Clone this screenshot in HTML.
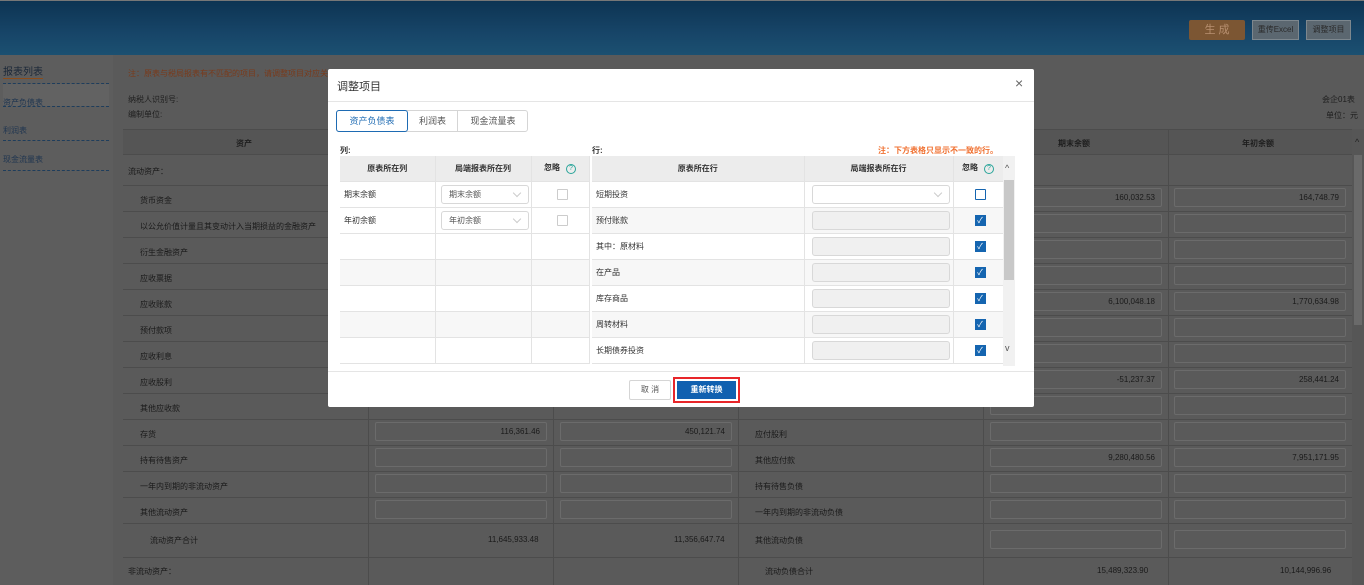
<!DOCTYPE html>
<html style="background:#5a5a5a"><head><meta charset="utf-8"><style>
*{box-sizing:border-box;margin:0;padding:0}
html,body{background:#5a5a5a}
body{width:1364px;height:585px;overflow:hidden;position:relative;font-family:"Liberation Sans","Noto Sans CJK SC",sans-serif;font-size:8px;color:#1e1e1e}
.a{position:absolute}
.bg{left:0;top:0;width:1364px;height:585px;background:#5a5a5a}
.hdr{left:0;top:0;width:1364px;height:55px;background:linear-gradient(180deg,#0d3453 0%,#174568 60%,#1b5071 100%);border-top:1px solid #777}
.side{left:0;top:55px;width:113px;height:530px;background:#5d5d5d}
.sl{left:3px;width:106px;border-bottom:1px dashed #1e3d5c}
.inp{position:absolute;height:19px;border:1px solid #6b6b6b;border-radius:2px;text-align:right;padding-right:6px;line-height:17px;font-size:8px;color:#1a1a1a}
.lbl{position:absolute;font-size:8px;color:#1a1a1a}
.m{left:328px;top:69px;width:706px;height:338px;background:#fff;border-radius:2px}
.mt td,.mt th{border-right:1px solid #e3e3e3;border-bottom:1px solid #e3e3e3;height:26px;font-size:8px;color:#333;text-align:left;padding-left:4px;font-weight:normal}
.mt th{background:#ececec;font-weight:bold;text-align:center;height:25px;padding:0}
.mt{border-collapse:collapse;position:absolute;table-layout:fixed}
.sel{width:88px;height:19px;border:1px solid #d8d8d8;border-radius:3px;margin:0 auto;font-size:8px;color:#555;line-height:17px;padding-left:7px;position:relative}
.sel:after{content:"";position:absolute;right:8px;top:4px;width:5px;height:5px;border-right:1px solid #ccc;border-bottom:1px solid #ccc;transform:rotate(45deg)}
.dis{width:138px;height:19px;border:1px solid #d8d8d8;border-radius:3px;background:#f0f0f0;margin:0 auto}
.cb{width:11px;height:11px;border:1px solid #ccc;border-radius:1px;margin:0 auto}
.ck{width:11px;height:11px;background:#1565b0;margin:0 auto;color:#fff;font-size:8px;line-height:11px;text-align:center}
.q{display:inline-block;width:10px;height:10px;border:1px solid #2aa59a;border-radius:50%;color:#2aa59a;font-size:7px;line-height:8px;text-align:center;margin-left:6px;font-weight:normal}
.g{color:#aaa}
</style></head><body>
<div class="a bg"></div>
<div class="a hdr"></div>
<div class="a" style="left:1189px;top:20px;width:56px;height:20px;background:#7c5633;color:#b89070;font-size:11px;text-align:center;line-height:20px;border-radius:2px">生 成</div>
<div class="a" style="left:1252px;top:20px;width:47px;height:20px;background:#5b6770;border:1px solid #7d878e;color:#2a2a2a;font-size:8px;text-align:center;line-height:18px">重传Excel</div>
<div class="a" style="left:1306px;top:20px;width:45px;height:20px;background:#5b6770;border:1px solid #7d878e;color:#2a2a2a;font-size:8px;text-align:center;line-height:18px">调整项目</div>

<div class="a side"></div>
<div class="a" style="left:3px;top:63px;font-size:10px;color:#1c2838;border-bottom:1px solid #8a4d1c">报表列表</div>
<div class="a sl" style="top:83px"></div>
<div class="a" style="left:3px;top:84px;width:106px;height:22px;background:#626262"></div>
<div class="a" style="left:3px;top:97px;color:#1f3550">资产负债表</div>
<div class="a sl" style="top:106px"></div>
<div class="a" style="left:3px;top:125px;color:#1f3550">利润表</div>
<div class="a sl" style="top:140px"></div>
<div class="a" style="left:3px;top:154px;color:#1f3550">现金流量表</div>
<div class="a sl" style="top:170px"></div>

<div class="a" style="left:128px;top:68px;color:#7a3a1a">注：原表与税局报表有不匹配的项目，请调整项目对应关系</div>
<div class="a" style="left:128px;top:94px;color:#1e1e1e">纳税人识别号:</div>
<div class="a" style="left:128px;top:109px;color:#1e1e1e">编制单位:</div>
<div class="a" style="left:1322px;top:94px">会企01表</div>
<div class="a" style="left:1326px;top:110px">单位：元</div>

<div class="a" style="left:123px;top:129px;width:1229px;height:26px;background:#555;border-top:1px solid #4c4c4c;border-bottom:1px solid #4c4c4c"></div>
<div class="a" style="left:236px;top:138px;font-weight:bold">资产</div>
<div class="a" style="left:1058px;top:138px;font-weight:bold">期末余额</div>
<div class="a" style="left:1242px;top:138px;font-weight:bold">年初余额</div>
<div class="a" style="left:1352px;top:129px;width:12px;height:456px;background:#565656"></div>
<div class="a" style="left:1355px;top:137px;font-size:9px;color:#222">^</div>
<div class="a" style="left:1354px;top:155px;width:8px;height:170px;background:#6a6a6a"></div>

<div class="a" style="left:368px;top:129px;width:1px;height:456px;background:#4c4c4c"></div>
<div class="a" style="left:553px;top:129px;width:1px;height:456px;background:#4c4c4c"></div>
<div class="a" style="left:738px;top:129px;width:1px;height:456px;background:#4c4c4c"></div>
<div class="a" style="left:983px;top:129px;width:1px;height:456px;background:#4c4c4c"></div>
<div class="a" style="left:1168px;top:129px;width:1px;height:456px;background:#4c4c4c"></div>
<div class="a" style="left:123px;top:185px;width:1229px;height:1px;background:#4c4c4c;box-shadow:0 26px #4c4c4c,0 52px #4c4c4c,0 78px #4c4c4c,0 104px #4c4c4c,0 130px #4c4c4c,0 156px #4c4c4c,0 182px #4c4c4c,0 208px #4c4c4c,0 234px #4c4c4c,0 260px #4c4c4c,0 286px #4c4c4c,0 312px #4c4c4c,0 338px #4c4c4c,0 372px #4c4c4c"></div>

<div class="lbl" style="left:128px;top:166px">流动资产：</div>
<div class="lbl" style="left:140px;top:195px">货币资金</div>
<div class="lbl" style="left:140px;top:221px">以公允价值计量且其变动计入当期损益的金融资产</div>
<div class="lbl" style="left:140px;top:247px">衍生金融资产</div>
<div class="lbl" style="left:140px;top:273px">应收票据</div>
<div class="lbl" style="left:140px;top:299px">应收账款</div>
<div class="lbl" style="left:140px;top:325px">预付款项</div>
<div class="lbl" style="left:140px;top:351px">应收利息</div>
<div class="lbl" style="left:140px;top:377px">应收股利</div>
<div class="lbl" style="left:140px;top:403px">其他应收款</div>
<div class="lbl" style="left:140px;top:429px">存货</div>
<div class="lbl" style="left:140px;top:455px">持有待售资产</div>
<div class="lbl" style="left:140px;top:481px">一年内到期的非流动资产</div>
<div class="lbl" style="left:140px;top:507px">其他流动资产</div>
<div class="lbl" style="left:150px;top:535px">流动资产合计</div>
<div class="lbl" style="left:128px;top:566px">非流动资产：</div>

<div class="inp" style="left:375px;top:422px;width:172px">116,361.46</div>
<div class="inp" style="left:560px;top:422px;width:172px">450,121.74</div>
<div class="inp" style="left:375px;top:448px;width:172px"></div><div class="inp" style="left:560px;top:448px;width:172px"></div>
<div class="inp" style="left:375px;top:474px;width:172px"></div><div class="inp" style="left:560px;top:474px;width:172px"></div>
<div class="inp" style="left:375px;top:500px;width:172px"></div><div class="inp" style="left:560px;top:500px;width:172px"></div>
<div class="lbl" style="left:488px;top:535px">11,645,933.48</div>
<div class="lbl" style="left:674px;top:535px">11,356,647.74</div>

<div class="lbl" style="left:755px;top:429px">应付股利</div>
<div class="lbl" style="left:755px;top:455px">其他应付款</div>
<div class="lbl" style="left:755px;top:481px">持有待售负债</div>
<div class="lbl" style="left:755px;top:507px">一年内到期的非流动负债</div>
<div class="lbl" style="left:755px;top:535px">其他流动负债</div>
<div class="lbl" style="left:765px;top:566px">流动负债合计</div>

<div class="inp" style="left:990px;top:188px;width:172px">160,032.53</div><div class="inp" style="left:1174px;top:188px;width:172px">164,748.79</div>
<div class="inp" style="left:990px;top:214px;width:172px"></div><div class="inp" style="left:1174px;top:214px;width:172px"></div>
<div class="inp" style="left:990px;top:240px;width:172px"></div><div class="inp" style="left:1174px;top:240px;width:172px"></div>
<div class="inp" style="left:990px;top:266px;width:172px"></div><div class="inp" style="left:1174px;top:266px;width:172px"></div>
<div class="inp" style="left:990px;top:292px;width:172px">6,100,048.18</div><div class="inp" style="left:1174px;top:292px;width:172px">1,770,634.98</div>
<div class="inp" style="left:990px;top:318px;width:172px"></div><div class="inp" style="left:1174px;top:318px;width:172px"></div>
<div class="inp" style="left:990px;top:344px;width:172px"></div><div class="inp" style="left:1174px;top:344px;width:172px"></div>
<div class="inp" style="left:990px;top:370px;width:172px">-51,237.37</div><div class="inp" style="left:1174px;top:370px;width:172px">258,441.24</div>
<div class="inp" style="left:990px;top:396px;width:172px"></div><div class="inp" style="left:1174px;top:396px;width:172px"></div>
<div class="inp" style="left:990px;top:422px;width:172px"></div><div class="inp" style="left:1174px;top:422px;width:172px"></div>
<div class="inp" style="left:990px;top:448px;width:172px">9,280,480.56</div><div class="inp" style="left:1174px;top:448px;width:172px">7,951,171.95</div>
<div class="inp" style="left:990px;top:474px;width:172px"></div><div class="inp" style="left:1174px;top:474px;width:172px"></div>
<div class="inp" style="left:990px;top:500px;width:172px"></div><div class="inp" style="left:1174px;top:500px;width:172px"></div>
<div class="inp" style="left:990px;top:530px;width:172px"></div><div class="inp" style="left:1174px;top:530px;width:172px"></div>
<div class="lbl" style="left:1097px;top:566px">15,489,323.90</div>
<div class="lbl" style="left:1280px;top:566px">10,144,996.96</div>

<div class="a m">
 <div class="a" style="left:9px;top:9px;font-size:11px;color:#333">调整项目</div>
 <div class="a" style="left:687px;top:6px;font-size:14px;color:#666">×</div>
 <div class="a" style="left:0;top:32px;width:706px;height:1px;background:#e5e5e5"></div>
 <div class="a" style="left:8px;top:41px;width:192px;height:22px;border:1px solid #d5d5d5;border-radius:3px"></div>
 <div class="a" style="left:8px;top:41px;width:72px;height:22px;border:1px solid #1e6bb3;border-radius:3px;color:#1e6bb3;font-size:9px;text-align:center;line-height:20px">资产负债表</div>
 <div class="a" style="left:80px;top:41px;width:50px;height:22px;border-right:1px solid #d5d5d5;color:#555;font-size:9px;text-align:center;line-height:22px">利润表</div>
 <div class="a" style="left:130px;top:41px;width:70px;height:22px;color:#555;font-size:9px;text-align:center;line-height:22px">现金流量表</div>
 <div class="a" style="left:12px;top:76px;font-weight:bold;color:#333">列:</div>
 <div class="a" style="left:264px;top:76px;font-weight:bold;color:#333">行:</div>
 <div class="a" style="left:550px;top:76px;font-weight:bold;color:#f07030">注：下方表格只显示不一致的行。</div>
 <table class="mt" style="left:12px;top:87px;width:249px">
  <colgroup><col style="width:95px"><col style="width:96px"><col style="width:58px"></colgroup>
  <tr><th>原表所在列</th><th>局端报表所在列</th><th>忽略<span class="q">?</span></th></tr>
  <tr><td>期末余额</td><td><div class="sel">期末余额</div></td><td><div class="cb"></div></td></tr>
  <tr><td>年初余额</td><td><div class="sel">年初余额</div></td><td><div class="cb"></div></td></tr>
  <tr><td></td><td></td><td></td></tr>
  <tr style="background:#f7f7f7"><td></td><td></td><td></td></tr>
  <tr><td></td><td></td><td></td></tr>
  <tr style="background:#f7f7f7"><td></td><td></td><td></td></tr>
  <tr><td></td><td></td><td></td></tr>
 </table>
 <table class="mt" style="left:264px;top:87px;width:411px">
  <colgroup><col style="width:212px"><col style="width:149px"><col style="width:50px"></colgroup>
  <tr><th>原表所在行</th><th>局端报表所在行</th><th>忽略<span class="q">?</span></th></tr>
  <tr><td>短期投资</td><td><div class="sel" style="width:138px"></div></td><td><div class="cb" style="border-color:#1565b0"></div></td></tr>
  <tr style="background:#f7f7f7"><td class="g">预付账款</td><td><div class="dis"></div></td><td><div class="ck">✓</div></td></tr>
  <tr><td class="g">其中：原材料</td><td><div class="dis"></div></td><td><div class="ck">✓</div></td></tr>
  <tr style="background:#f7f7f7"><td class="g">在产品</td><td><div class="dis"></div></td><td><div class="ck">✓</div></td></tr>
  <tr><td class="g">库存商品</td><td><div class="dis"></div></td><td><div class="ck">✓</div></td></tr>
  <tr style="background:#f7f7f7"><td class="g">周转材料</td><td><div class="dis"></div></td><td><div class="ck">✓</div></td></tr>
  <tr><td class="g">长期债券投资</td><td><div class="dis"></div></td><td><div class="ck">✓</div></td></tr>
 </table>
 <div class="a" style="left:675px;top:87px;width:12px;height:210px;background:#f1f1f1"></div>
 <div class="a" style="left:676px;top:111px;width:10px;height:100px;background:#c8c8c8"></div>
 <div class="a" style="left:677px;top:94px;font-size:9px;color:#555">^</div>
 <div class="a" style="left:677px;top:274px;font-size:9px;color:#555">v</div>
 <div class="a" style="left:0;top:302px;width:706px;height:1px;background:#e5e5e5"></div>
 <div class="a" style="left:301px;top:311px;width:42px;height:20px;border:1px solid #d5d5d5;border-radius:2px;text-align:center;line-height:18px;color:#555">取 消</div>
 <div class="a" style="left:345px;top:308px;width:67px;height:26px;border:2px solid #e8262a"></div>
 <div class="a" style="left:349px;top:312px;width:59px;height:18px;background:#1060b0;color:#fff;text-align:center;line-height:18px;font-weight:bold">重新转换</div>
</div>
</body></html>
